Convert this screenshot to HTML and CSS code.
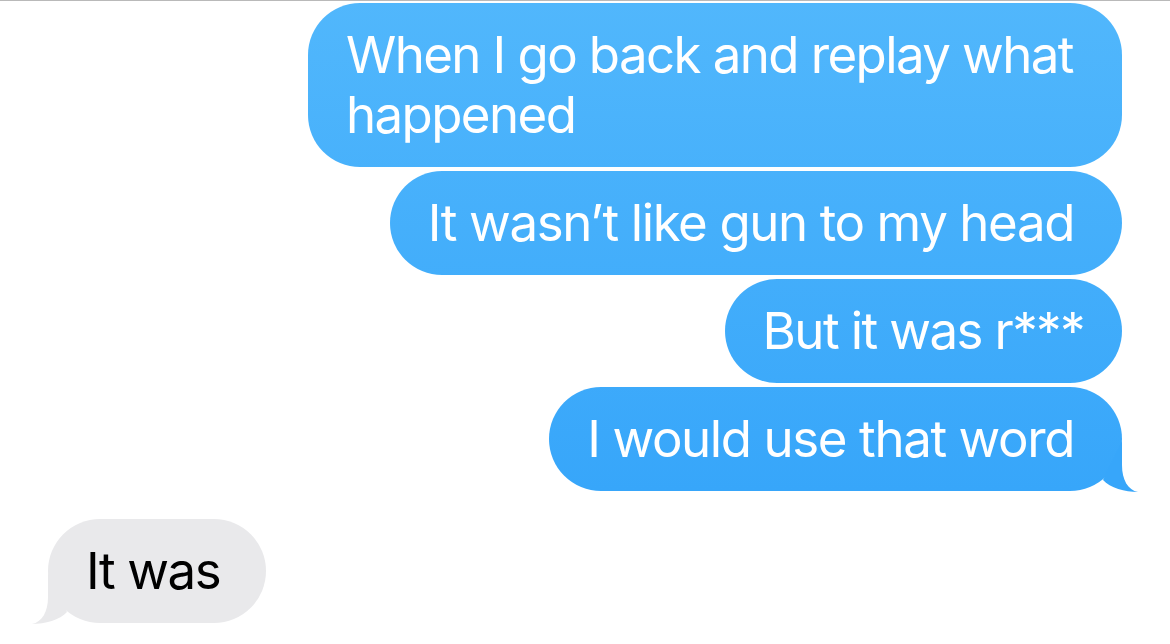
FILE: index.html
```html
<!DOCTYPE html>
<html lang="en">
<head>
<meta charset="utf-8">
<title>Messages</title>
<link rel="stylesheet" href="styles.css">
</head>
<body>
<div class="topline"></div>
<main class="thread">
  <div class="group group-sent">
    <div class="bubble sent wide">When I go back and replay what happened</div>
    <div class="bubble sent">It wasn’t like gun to my head</div>
    <div class="bubble sent short">But it was r***</div>
    <div class="bubble sent tailed">I would use that word
      <svg class="tail tail-sent" viewBox="0 0 45 52" width="45" height="52" aria-hidden="true"><path d="M27 1 L27 25 C27 40 33 50 43 52 C30 52 15 48 8 40 Z"/></svg>
    </div>
  </div>
  <div class="group group-received">
    <div class="bubble received tailed">It was
      <svg class="tail tail-received" viewBox="0 0 45 52" width="45" height="52" aria-hidden="true"><path d="M27 1 L27 25 C27 40 33 50 43 52 C30 52 15 48 8 40 Z"/></svg>
    </div>
  </div>
</main>
</body>
</html>
```
FILE: styles.css
```css
html, body {
  margin: 0;
  padding: 0;
  background: #ffffff;
}
body {
  width: 1170px;
  height: 644px;
  overflow: hidden;
  font-family: "Inter", "Liberation Sans", sans-serif;
}
.topline {
  height: 1px;
  background: #b9b9b9;
}
.thread {
  display: flex;
  flex-direction: column;
  padding-top: 2px;
}
.group {
  display: flex;
  flex-direction: column;
  gap: 4px;
}
.group-sent {
  align-items: flex-end;
  padding-right: 48px;
}
.group-received {
  align-items: flex-start;
  padding-left: 48px;
  margin-top: 28px;
}
.bubble {
  position: relative;
  box-sizing: border-box;
  font-size: 51px;
  line-height: 60px;
  padding: 22px 48px 22px 38px;
  border-radius: 52px;
  max-width: 814px;
  letter-spacing: -1.4px;
}
.sent {
  color: #ffffff;
  background: linear-gradient(to bottom, #51b7fc 0px, #37a6fa 491px) fixed;
}
.wide {
  width: 814px;
  padding-right: 40px;
  letter-spacing: -1.6px;
}
.short {
  padding-right: 38px;
  letter-spacing: -1.6px;
}
.received {
  color: #000000;
  background: #e9e9eb;
  padding-right: 46px;
}
.tail {
  position: absolute;
  bottom: -1px;
  display: block;
}
.tail-sent {
  right: -18px;
  fill: #37a6fa;
}
.tail-received {
  left: -18px;
  fill: #e9e9eb;
  transform: scaleX(-1);
}
```
